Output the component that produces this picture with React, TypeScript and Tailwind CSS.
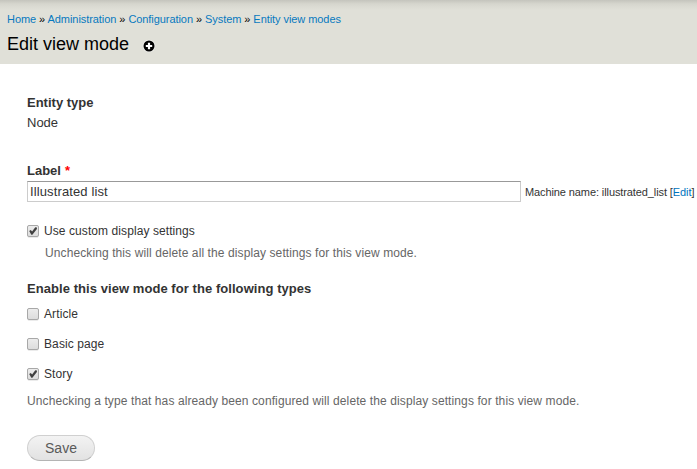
import React from "react";

function Check({ checked = false }: { checked?: boolean }) {
  return (
    <svg width="13" height="12" viewBox="0 0 13 12" className="block shrink-0 overflow-visible">
      <defs>
        <linearGradient id="box" x1="0" y1="0" x2="0" y2="1">
          <stop offset="0" stopColor="#ededed" />
          <stop offset="1" stopColor="#dcdcdc" />
        </linearGradient>
      </defs>
      <rect x="0.5" y="1.5" width="11" height="11" rx="1.5" fill="none" stroke="#000" strokeOpacity="0.08" />
      <rect x="0.5" y="0.5" width="11" height="11" rx="1.5" fill="url(#box)" stroke="#a8a8a8" />
      {checked && <path d="M2.2 6.1 L3.8 5.1 L5.1 6.6 L8.3 2.3 L9.9 2.5 L9.9 3.9 L5.4 9.7 L4.3 9.7 Z" fill="#404040" />}
    </svg>
  );
}

const crumbs = ["Home", "Administration", "Configuration", "System", "Entity view modes"];
const types = [
  { name: "Article", on: false },
  { name: "Basic page", on: false },
  { name: "Story", on: true },
];

export default function App() {
  return (
    <div className="h-[469px] w-[697px] overflow-hidden bg-white font-['Liberation_Sans',Arial,sans-serif] text-[13px] leading-5 text-[#333]">
      <header className="h-16 bg-[#e0e0d8] bg-[linear-gradient(#c4c4bd,#d6d6ce_4px,#e0e0d8_10px)] px-[7px] pt-3">
        <nav className="h-[15px] whitespace-nowrap text-[11px] leading-[15px] tracking-[-0.065px] text-black">
          {crumbs.map((c, i) => (
            <React.Fragment key={c}>
              {i > 0 && " » "}
              <a className="text-[#0779bf]">{c}</a>
            </React.Fragment>
          ))}
        </nav>
        <div className="flex h-[34px] items-center">
          <h1 className="whitespace-nowrap text-[18px] leading-[34px] text-black">Edit view mode</h1>
          <svg width="12" height="12" viewBox="0 0 12 12" className="mt-1 ml-[14px] overflow-visible">
            <circle cx="6" cy="6" r="6.3" fill="#fff" fillOpacity="0.6" />
            <circle cx="6" cy="6" r="5.5" fill="#000" />
            <path d="M6 2.8v6.4M2.8 6h6.4" stroke="#fff" strokeWidth="2.2" />
          </svg>
        </div>
      </header>
      <main className="px-[27px] pt-[29px]">
        <div className="font-bold">Entity type</div>
        <div>Node</div>
        <div className="mt-7 font-bold">Label <span className="ml-[0.5px] text-[#f00]">*</span></div>
        <div className="flex">
          <div className="h-[21px] w-[494px] shrink-0 border border-[#ccc] border-t-[#999] px-0.5 leading-[19px] tracking-[0.12px]">Illustrated list</div>
          <div className="ml-1 whitespace-nowrap text-[11px] leading-[22px] tracking-[-0.1px]">
            Machine name: illustrated_list [<a className="text-[#0074bd]">Edit</a>]
          </div>
        </div>
        <div className="mt-[18px] flex h-5 items-center text-[12px] tracking-[0.08px]">
          <Check checked />
          <span className="ml-1">Use custom display settings</span>
        </div>
        <div className="mt-0.5 ml-[18px] text-[12px] tracking-[0.1px] text-[#666]">Unchecking this will delete all the display settings for this view mode.</div>
        <div className="mt-4 font-bold tracking-[0.06px]">Enable this view mode for the following types</div>
        <div className="mt-[5px] flex flex-col gap-[10px]">
          {types.map((t) => (
            <div key={t.name} className="flex h-5 items-center text-[12px] tracking-[0.1px]">
              <Check checked={t.on} />
              <span className="ml-1">{t.name}</span>
            </div>
          ))}
        </div>
        <div className="mt-[7px] text-[12px] tracking-[0.105px] text-[#666]">Unchecking a type that has already been configured will delete the display settings for this view mode.</div>
        <button className="mt-6 block h-[26px] w-[68px] rounded-full border border-[#d0d0d0] border-b-[#b4b4b4] bg-linear-to-b from-[#f3f3f3] to-[#e2e2e2] text-center text-[14px] leading-6 text-[#5a5a5a]">Save</button>
      </main>
    </div>
  );
}
